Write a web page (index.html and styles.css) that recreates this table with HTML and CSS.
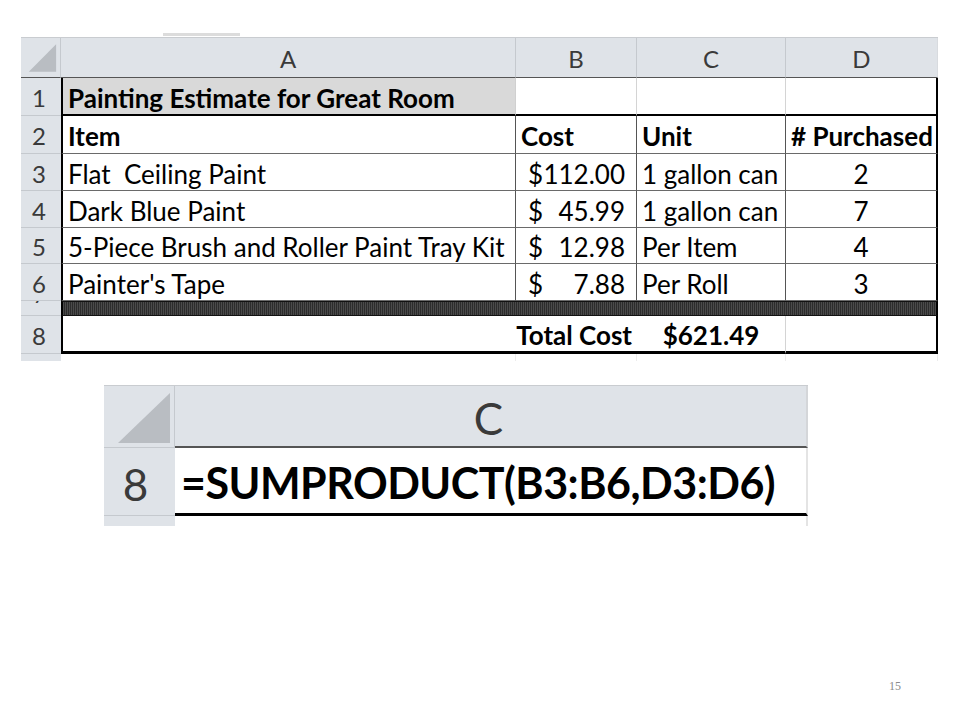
FILE: index.html
```html
<!DOCTYPE html>
<html>
<head>
<meta charset="utf-8">
<link rel="stylesheet" href="styles.css">
</head>
<body>
<div class="slide">
  <div class="tabline"></div>
  <div class="sheet top">
    <div class="corner"><svg width="40" height="38" viewBox="0 0 40 38"><polygon points="8,34 36,34 36,6" fill="#b9bdc2"/></svg></div>
    <div class="colh">A</div>
    <div class="colh">B</div>
    <div class="colh">C</div>
    <div class="colh last">D</div>

    <div class="rowh">1</div>
    <div class="c a r1 title bold">Painting Estimate for Great Room</div>
    <div class="c r1 grid"></div>
    <div class="c r1 grid"></div>
    <div class="c r1 d"></div>

    <div class="rowh">2</div>
    <div class="c a rr bold">Item</div>
    <div class="c rr bold">Cost</div>
    <div class="c rr bold">Unit</div>
    <div class="c d rr bold">#&nbsp;Purchased</div>

    <div class="rowh">3</div>
    <div class="c a rr">Flat&nbsp; Ceiling Paint</div>
    <div class="c rr money"><span>$</span><span>112.00</span></div>
    <div class="c rr">1 gallon can</div>
    <div class="c d rr num">2</div>

    <div class="rowh">4</div>
    <div class="c a rr">Dark Blue Paint</div>
    <div class="c rr money"><span>$</span><span>45.99</span></div>
    <div class="c rr">1 gallon can</div>
    <div class="c d rr num">7</div>

    <div class="rowh">5</div>
    <div class="c a rr">5-Piece Brush and Roller Paint Tray Kit</div>
    <div class="c rr money"><span>$</span><span>12.98</span></div>
    <div class="c rr">Per Item</div>
    <div class="c d rr num">4</div>

    <div class="rowh">6</div>
    <div class="c a rr">Painter's Tape</div>
    <div class="c rr money"><span>$</span><span>7.88</span></div>
    <div class="c rr">Per Roll</div>
    <div class="c d rr num">3</div>

    <div class="rowh r7"><span>7</span></div>
    <div class="bar"></div>

    <div class="rowh">8</div>
    <div class="c a r8"></div>
    <div class="c r8 right bold">Total Cost</div>
    <div class="c r8 grid num bold">$621.49</div>
    <div class="c r8 d"></div>

    <div class="rowh tail"></div>
    <div class="tailc"></div>
    <div class="tailc"></div>
    <div class="tailc"></div>
    <div class="tailc"></div>
  </div>

  <div class="sheet bottom">
    <div class="corner2"><svg width="70" height="61" viewBox="0 0 70 61"><polygon points="14,57 66,57 66,7" fill="#b9bdc2"/></svg></div>
    <div class="colh2">C</div>
    <div class="rowh2">8</div>
    <div class="formula">=SUMPRODUCT(B3:B6,D3:D6)</div>
    <div class="rowh2 tail2"></div>
    <div class="tailc2"></div>
  </div>

  <div class="footer"><span class="pagenum">15</span></div>
</div>
</body>
</html>
```

FILE: styles.css
```css
html, body {
  margin: 0;
  padding: 0;
  background: #ffffff;
}

.slide {
  width: 960px;
  height: 720px;
  overflow: hidden;
  font-family: Lato, "Open Sans", sans-serif;
}

.tabline {
  margin: 33px 0 0 163px;
  width: 77px;
  height: 3px;
  background: #dcdcdc;
}

.sheet.top {
  display: grid;
  margin-left: 21px;
  margin-top: 1px;
  width: 917px;
  grid-template-columns: 40px 455px 121px 149px 152px;
  grid-template-rows: 40px 38px 38px 37px 37px 36px 37px 15px 38px 7px;
  border-top: 1px solid #c9ccd0;
}

.sheet > div {
  box-sizing: border-box;
}

.corner {
  background: #dfe3e8;
  border-right: 1px solid #c5c9ce;
  border-bottom: 1px solid #555;
  display: flex;
}

.colh {
  background: #dfe3e8;
  border-right: 1px solid #c5c9ce;
  border-bottom: 1px solid #555;
  display: flex;
  align-items: center;
  justify-content: center;
  font-size: 24px;
  color: #3a3a3a;
  padding-top: 2px;
}

.colh.last {
  border-right: 1px solid #d8dbdf;
}

.rowh {
  background: #dfe3e8;
  border-bottom: 1px solid #c5c9ce;
  display: flex;
  align-items: center;
  justify-content: center;
  font-size: 24px;
  color: #3a3a3a;
  padding-top: 2px;
  padding-right: 4px;
}

.rowh.r7 {
  overflow: hidden;
  align-items: flex-start;
  padding-top: 0;
}

.rowh.r7 span {
  display: block;
  font-size: 20px;
  line-height: 20px;
  margin-top: -16px;
}

.rowh.tail {
  border-bottom: none;
}

.c {
  display: flex;
  align-items: center;
  padding: 3px 5px 0 5px;
  font-size: 26px;
  color: #000;
  white-space: nowrap;
  overflow: visible;
}

.bold {
  font-weight: 700;
}

.c.a {
  border-left: 2px solid #000;
}

.c.title {
  background: #d9d9d9;
}

.c.r1 {
  border-bottom: 2px solid #000;
}

.c.r1.a {
  border-right: 1px solid #d0d0d0;
}

.c.grid {
  border-right: 1px solid #d4d4d4;
}

.c.d {
  border-right: 2px solid #000;
}

.c.rr {
  border-bottom: 1px solid #6a6a6a;
}

.c.rr:not(.d) {
  border-right: 1px solid #555;
}

.c.money {
  justify-content: space-between;
  padding-left: 12px;
  padding-right: 11px;
}

.c.num {
  justify-content: center;
}

.c.right {
  justify-content: flex-end;
}

.bar {
  grid-column: span 4;
  border-left: 2px solid #000;
  border-right: 2px solid #000;
  border-top: 1px solid #111;
  border-bottom: 1px solid #111;
  background: repeating-linear-gradient(90deg, #4a4a4a 0 1px, #2c2c2c 1px 2px);
}

.c.r8 {
  border-bottom: 3px solid #000;
}

.c.r8.a {
  border-right: none;
}

.tailc {
  border-right: 1px solid #ececec;
}

.sheet.bottom {
  display: grid;
  margin-left: 104px;
  margin-top: 24px;
  width: 704px;
  grid-template-columns: 71px 633px;
  grid-template-rows: 62px 68px 10px;
  border-top: 1px solid #c9ccd0;
}

.corner2 {
  background: #dfe3e8;
  border-right: 1px solid #c5c9ce;
  border-bottom: 1px solid #c5c9ce;
  display: flex;
}

.colh2 {
  background: #dfe3e8;
  border-right: 2px solid #d4d6d9;
  border-bottom: 2px solid #555;
  display: flex;
  align-items: center;
  justify-content: center;
  font-size: 44px;
  color: #3a3a3a;
  padding-top: 4px;
  padding-right: 4px;
}

.rowh2 {
  background: #dfe3e8;
  border-bottom: 1px solid #c5c9ce;
  display: flex;
  align-items: center;
  justify-content: center;
  font-size: 44px;
  color: #3a3a3a;
  padding-top: 4px;
  padding-right: 8px;
}

.rowh2.tail2 {
  border-bottom: none;
}

.formula {
  display: flex;
  align-items: center;
  border-bottom: 3px solid #000;
  border-right: 2px solid #e4e4e4;
  padding: 4px 0 0 6px;
  font-size: 43px;
  font-weight: 700;
  color: #000;
  white-space: nowrap;
  letter-spacing: -0.5px;
}

.tailc2 {
  border-right: 2px solid #e4e4e4;
}

.footer {
  display: flex;
  justify-content: flex-end;
  margin-top: 152px;
  padding-right: 59px;
}

.pagenum {
  font-family: "Liberation Serif", serif;
  font-size: 12px;
  line-height: 16px;
  color: #8a8a8a;
}
```
